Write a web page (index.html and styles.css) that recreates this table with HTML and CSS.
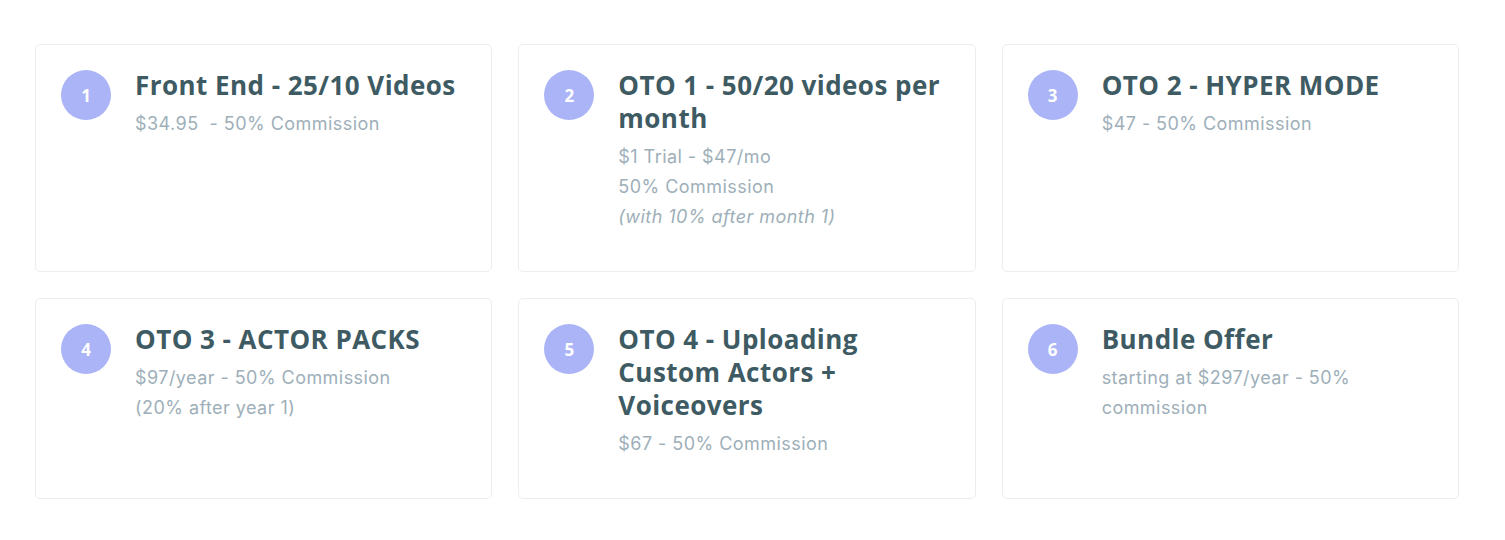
FILE: index.html
```html
<!DOCTYPE html>
<html lang="en">
<head>
<meta charset="utf-8">
<title>Offers</title>
<link rel="stylesheet" href="styles.css">
</head>
<body>
<main class="grid">
  <section class="card">
    <div class="num">1</div>
    <div class="content">
      <h3 class="title">Front End - 25/10 Videos</h3>
      <p class="desc">$34.95&nbsp; - 50% Commission</p>
    </div>
  </section>
  <section class="card">
    <div class="num">2</div>
    <div class="content">
      <h3 class="title">OTO 1 - 50/20 videos per month</h3>
      <p class="desc">$1 Trial - $47/mo<br>50% Commission<br><em>(with 10% after month 1)</em></p>
    </div>
  </section>
  <section class="card">
    <div class="num">3</div>
    <div class="content">
      <h3 class="title">OTO 2 - HYPER MODE</h3>
      <p class="desc">$47 - 50% Commission</p>
    </div>
  </section>
  <section class="card">
    <div class="num">4</div>
    <div class="content">
      <h3 class="title">OTO 3 - ACTOR PACKS</h3>
      <p class="desc">$97/year - 50% Commission<br>(20% after year 1)</p>
    </div>
  </section>
  <section class="card">
    <div class="num">5</div>
    <div class="content">
      <h3 class="title">OTO 4 - Uploading Custom Actors + Voiceovers</h3>
      <p class="desc">$67 - 50% Commission</p>
    </div>
  </section>
  <section class="card">
    <div class="num">6</div>
    <div class="content">
      <h3 class="title">Bundle Offer</h3>
      <p class="desc">starting at $297/year - 50% commission</p>
    </div>
  </section>
</main>
</body>
</html>
```

FILE: styles.css
```css
* { box-sizing: border-box; }
html, body { margin: 0; padding: 0; background: #ffffff; }
body { font-family: "Inter", "Open Sans", sans-serif; }

.grid {
  width: 1424px;
  margin: 44px 0 0 35px;
  display: grid;
  grid-template-columns: repeat(3, 1fr);
  column-gap: 26px;
  row-gap: 26px;
}

.card {
  display: flex;
  align-items: flex-start;
  gap: 24px;
  padding: 25px 26px 39px 25px;
  border: 1px solid #ededed;
  border-radius: 5px;
  background: #fff;
}

.num {
  flex: 0 0 50px;
  width: 50px;
  height: 50px;
  border-radius: 50%;
  background: #aab4f6;
  color: #fff;
  font-family: "Open Sans", sans-serif;
  font-weight: 700;
  font-size: 17px;
  display: flex;
  align-items: center;
  justify-content: center;
}

.content { flex: 1; min-width: 0; padding-right: 0; }

.title {
  margin: -1px 0 0;
  font-family: "Open Sans", sans-serif;
  font-weight: 700;
  font-size: 26px;
  line-height: 33px;
  color: #3e5a62;
  letter-spacing: 0.45px;
}

.desc {
  margin: 7px 0 0;
  font-family: "Inter", sans-serif;
  font-size: 18px;
  line-height: 30px;
  color: #9eafb9;
  letter-spacing: 0.45px;
}
.desc em { font-style: italic; }
```
